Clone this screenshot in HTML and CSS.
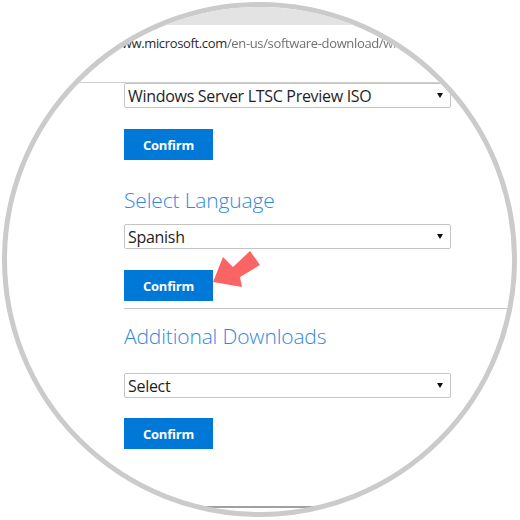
FILE: index.html
```html
<!DOCTYPE html>
<html lang="en">
<head>
<meta charset="utf-8">
<title>Download Windows Server</title>
<link rel="stylesheet" href="styles.css">
</head>
<body>
<div class="lens">
  <div class="chrome"></div>
  <div class="address"><span class="host">www.microsoft.com</span><span class="path">/en-us/software-download/wind</span></div>
  <div class="content">
    <div class="select"><span>Windows Server LTSC Preview ISO</span><svg class="caret" width="6" height="5" viewBox="0 0 6 5"><polygon points="0,0 6,0 3,5" fill="#111"/></svg></div>
    <button class="btn">Confirm</button>
    <h2 class="heading first">Select Language</h2>
    <div class="select"><span>Spanish</span><svg class="caret" width="6" height="5" viewBox="0 0 6 5"><polygon points="0,0 6,0 3,5" fill="#111"/></svg></div>
    <button class="btn">Confirm</button>
    <section class="extra">
      <h2 class="heading second">Additional Downloads</h2>
      <div class="select"><span>Select</span><svg class="caret" width="6" height="5" viewBox="0 0 6 5"><polygon points="0,0 6,0 3,5" fill="#111"/></svg></div>
      <button class="btn">Confirm</button>
    </section>
    <div class="footer-rule"></div>
  </div>
  <svg class="pointer" width="520" height="520" viewBox="0 0 520 520">
    <polygon points="213,282 223,257 233,267 250,251 260,265 240,277 242,287" fill="#fa6464"/>
  </svg>
</div>
</body>
</html>
```
FILE: styles.css
```css
html, body {
  margin: 0;
  padding: 0;
  background: #ffffff;
}

body {
  width: 520px;
  height: 520px;
  overflow: hidden;
  font-family: "Segoe UI", "Open Sans", "Noto Sans", sans-serif;
}

.lens {
  position: relative;
  box-sizing: border-box;
  width: 515px;
  height: 515px;
  margin: 2px;
  border: 5px solid #cbcbcb;
  border-radius: 50%;
  overflow: hidden;
  background: #ffffff;
}

.chrome {
  height: 18px;
  background: #e3e3e3;
}

.address {
  box-sizing: border-box;
  height: 58px;
  padding: 9px 0 0 105px;
  border-bottom: 1px solid #cfcfcf;
  font-size: 13px;
  line-height: 18px;
  letter-spacing: -0.35px;
  white-space: nowrap;
}

.host {
  color: #2b2b2b;
}

.path {
  color: #717171;
  -webkit-mask-image: linear-gradient(to right, #000 85%, rgba(0, 0, 0, 0.35) 100%);
  mask-image: linear-gradient(to right, #000 85%, rgba(0, 0, 0, 0.35) 100%);
}

.content {
  padding-left: 117px;
}

.select {
  box-sizing: border-box;
  width: 327px;
  height: 25px;
  padding: 2px 7px 0 3px;
  border: 1px solid #c4c4c4;
  border-radius: 2px;
  display: flex;
  align-items: center;
  justify-content: space-between;
  font-size: 16px;
  line-height: 21px;
  letter-spacing: -0.3px;
  color: #1e1e1e;
}

.caret {
  display: block;
  margin-top: -2px;
}

.btn {
  display: block;
  width: 89px;
  height: 31px;
  margin: 21px 0 0;
  padding: 0;
  border: none;
  background: #0078d7;
  color: #ffffff;
  font-family: inherit;
  font-size: 13px;
  font-weight: 700;
  letter-spacing: -0.2px;
}

.heading {
  margin: 0;
  font-family: "Segoe UI Light", "Open Sans", "Noto Sans", sans-serif;
  font-size: 21px;
  font-weight: 300;
  line-height: 30px;
  letter-spacing: -0.15px;
  color: #3389de;
}

.heading.first {
  margin: 25px 0 9px;
}

.extra {
  margin-top: 7px;
  border-top: 1px solid #c4c4c4;
}

.heading.second {
  margin: 12px 0 22px;
}

.extra .btn {
  margin-top: 20px;
}

.footer-rule {
  margin-top: 57px;
  border-top: 2px solid #a0a0a0;
}

.pointer {
  position: absolute;
  left: -7px;
  top: -7px;
}
```
